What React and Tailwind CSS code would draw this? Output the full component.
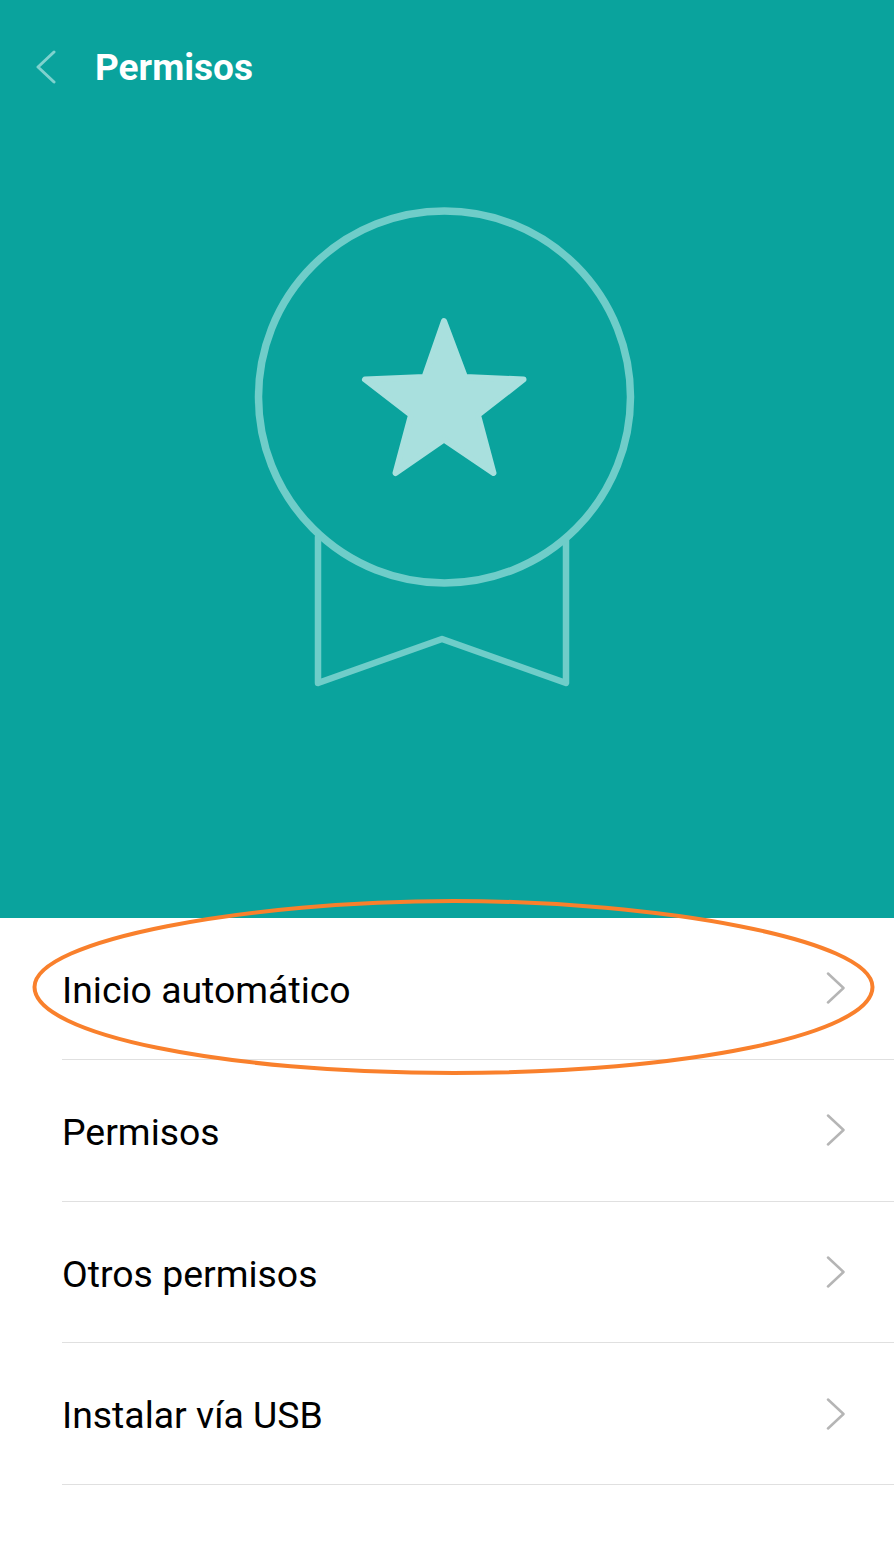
const rows = ["Inicio automático", "Permisos", "Otros permisos", "Instalar vía USB"];

const Medal = () => (
  <svg width="400" height="500" viewBox="0 0 400 500" fill="none" className="block">
    {/* ribbon */}
    <path
      d="M71 345V491L195 447L319 491V345"
      stroke="#6fcdc9"
      strokeWidth="6.500"
      strokeLinecap="round"
      strokeLinejoin="round"
    />
    <circle cx="197.500" cy="205" r="186" stroke="#6fcdc9" strokeWidth="7.500" fill="#0aa39d" />
    {/* star */}
    <path
      d="M197 129L218 185L276.500 187.500L231 223L246.500 281L197 247.500L148.500 281L164 223L118 187.500L177.500 185Z"
      fill="#a9e0de"
      stroke="#a9e0de"
      strokeWidth="6"
      strokeLinejoin="round"
    />
  </svg>
);

const App = () => {
  return (
    <div
      className="relative w-[894px] h-[1558px] overflow-hidden bg-white"
      style={{ fontFamily: "Roboto, sans-serif" }}
    >
      {/* cabecera */}
      <div className="h-[918px] bg-[#0aa39d] flex flex-col">
        <div className="flex items-center h-[134px] pl-[36px]">
          <svg width="20" height="34" viewBox="0 0 20 34" fill="none" className="mr-[39px]">
            <path d="M18 2L2 17L18 32" stroke="#7fd2ce" strokeWidth="3" strokeLinecap="round" strokeLinejoin="round" />
          </svg>
          <h1 className="text-[37px] leading-none font-bold text-white">Permisos</h1>
        </div>
        <div className="flex justify-center pt-[58px]">
          <Medal />
        </div>
      </div>

      {/* lista */}
      <ul className="pl-[62px]">
        {rows.map((label) => (
          <li
            key={label}
            className="h-[141.750px] flex items-center justify-between border-b border-[#e0e0e0] pr-[48px]"
          >
            <span className="text-[37.400px] leading-none pt-[5px] text-black">{label}</span>
            <svg width="20" height="32" viewBox="0 0 20 32" fill="none">
              <path d="M2 1.500L17.500 16L2 30.500" stroke="#b5b5b5" strokeWidth="2.500" strokeLinecap="round" strokeLinejoin="round" />
            </svg>
          </li>
        ))}
      </ul>

      {/* marca naranja */}
      <svg
        width="850"
        height="184"
        viewBox="0 0 850 184"
        fill="none"
        className="absolute left-[29px] top-[895px] pointer-events-none"
      >
        <path
          d="M5.500 92C5.500 44.500 219.500 6 424.500 6C629.500 6 843.500 44.500 843.500 92C843.500 139.500 655.500 178 424.500 178C193.500 178 5.500 139.500 5.500 92Z"
          stroke="#f9802c"
          strokeWidth="4"
        />
      </svg>
    </div>
  );
};

export default App;
